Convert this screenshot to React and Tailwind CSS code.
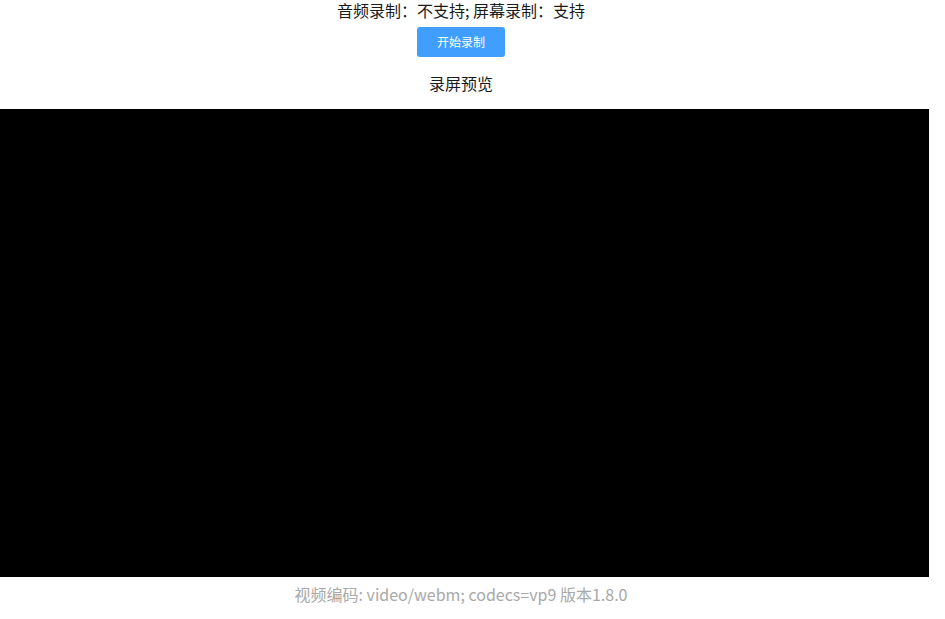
export default function App() {
  return (
    <div
      className="w-[945px] h-[619px] bg-white overflow-hidden"
      style={{ fontFamily: '"Noto Sans CJK SC", "Noto Sans", sans-serif' }}
    >
      <div className="w-[922px] flex flex-col items-center">
        <div className="text-[16px] leading-[20px] text-[#1a1a1a]">
          音频录制：不支持; 屏幕录制：支持
        </div>
        <button className="mt-[7px] w-[88px] h-[30px] rounded-[3px] bg-[#409eff] text-white text-[12px] leading-none flex items-center justify-center">
          开始录制
        </button>
        <div className="mt-[15px] text-[16px] leading-[22px] text-[#1a1a1a]">
          录屏预览
        </div>
      </div>
      <div className="mt-[15px] w-[929px] h-[468px] bg-black"></div>
      <div className="w-[922px] mt-[6px] text-center text-[16px] leading-[22px] text-[#a8a8a8]">
        视频编码: video/webm; codecs=vp9 版本1.8.0
      </div>
    </div>
  );
}
